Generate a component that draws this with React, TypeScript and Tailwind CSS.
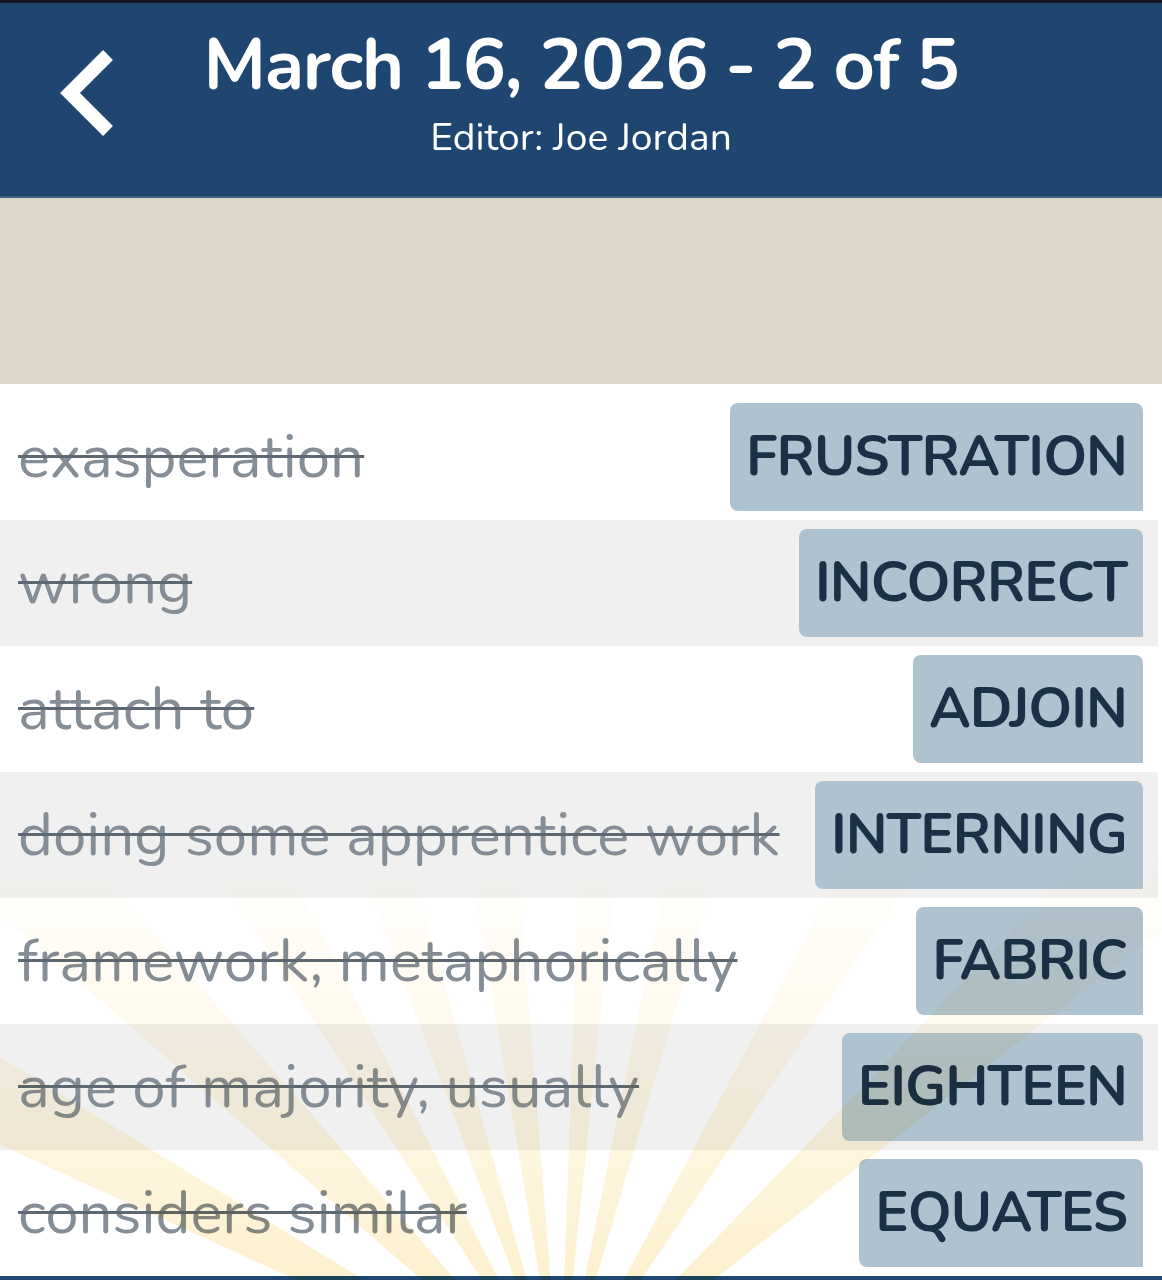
type Clue = {
  clue: string;
  answer: string;
};

const clues: Clue[] = [
  { clue: "exasperation", answer: "FRUSTRATION" },
  { clue: "wrong", answer: "INCORRECT" },
  { clue: "attach to", answer: "ADJOIN" },
  { clue: "doing some apprentice work", answer: "INTERNING" },
  { clue: "framework, metaphorically", answer: "FABRIC" },
  { clue: "age of majority, usually", answer: "EIGHTEEN" },
  { clue: "considers similar", answer: "EQUATES" },
];

const font = "font-['Nunito','Open_Sans','Noto_Sans',sans-serif]";

// light rays over the bottom of the list, drawn in page coordinates
const Sunburst = () => {
  const cx = 560;
  const cy = 1400;
  const rays: [number, number][] = [
    [-62, 7],
    [-45, 8],
    [-30, 6],
    [-18, 5],
    [-7, 5],
    [4, 4],
    [14, 5],
    [31, 6],
    [48, 8],
  ];
  return (
    <svg
      className="pointer-events-none absolute inset-0 h-full w-full mix-blend-multiply"
      viewBox="0 384 1162 896"
      preserveAspectRatio="none"
    >
      <defs>
        <linearGradient id="fade" x1="0" y1="0" x2="0" y2="1">
          <stop offset="0.52" stopColor="#fff" stopOpacity="0" />
          <stop offset="0.8" stopColor="#fff" stopOpacity="0.45" />
          <stop offset="1" stopColor="#fff" stopOpacity="0.85" />
        </linearGradient>
        <mask id="fadeMask">
          <rect x="0" y="384" width="1162" height="896" fill="url(#fade)" />
        </mask>
      </defs>
      <g mask="url(#fadeMask)">
        {rays.map(([a, w]) => {
          const r = 1400;
          const a1 = ((a - w / 2) * Math.PI) / 180;
          const a2 = ((a + w / 2) * Math.PI) / 180;
          const p1 = `${cx + r * Math.sin(a1)},${cy - r * Math.cos(a1)}`;
          const p2 = `${cx + r * Math.sin(a2)},${cy - r * Math.cos(a2)}`;
          return (
            <polygon
              key={a}
              points={`${cx},${cy} ${p1} ${p2}`}
              fill="#fbe3a0"
              opacity="0.6"
            />
          );
        })}
      </g>
    </svg>
  );
};

export default function App() {
  return (
    <div className={`flex h-[1280px] w-[1162px] flex-col overflow-hidden bg-white ${font}`}>
      <div className="h-[3px] bg-[#151a20]" />
      <header className="relative flex h-[195px] flex-col items-center border-b-2 border-[#3f6186] bg-[#1f4670] text-white">
        <button className="absolute left-[50px] top-[44px]">
          <svg width="72" height="96" viewBox="0 0 72 96" fill="none">
            <polyline
              points="58,8 20,46 58,84"
              stroke="#fff"
              strokeWidth="14"
              strokeLinecap="butt"
              strokeLinejoin="miter"
            />
          </svg>
        </button>
        <h1 className="mt-[25px] text-[72px] leading-[74px] font-bold tracking-[-1.3px]">
          March 16, 2026 - 2 of 5
        </h1>
        <p className="mt-[14px] text-[39px] leading-[44px]">Editor: Joe Jordan</p>
      </header>
      <div className="h-[186px] bg-[#ded8cb]" />
      <div className="relative flex-1 pt-[10px]">
        <ul className="flex flex-col">
          {clues.map((c, i) => (
            <li
              key={c.answer}
              className={`mr-[4px] flex h-[126px] items-center justify-between pl-[18px] pr-[15px] ${
                i % 2 === 1 ? "bg-[#f0f0f0]" : "bg-white"
              }`}
            >
              <span className="text-[60px] leading-[70px] text-[#858d96] line-through decoration-[#5e6872] decoration-[3px]">
                {c.clue}
              </span>
              <span className="flex h-[108px] items-center rounded-lg rounded-br-none bg-[#afc2cf] px-[16px] text-[56px] font-bold tracking-[-1px] text-[#1b2f45]">
                {c.answer}
              </span>
            </li>
          ))}
        </ul>
        <div className="h-[4px] bg-[#1f4670]" />
        <Sunburst />
      </div>
    </div>
  );
}
